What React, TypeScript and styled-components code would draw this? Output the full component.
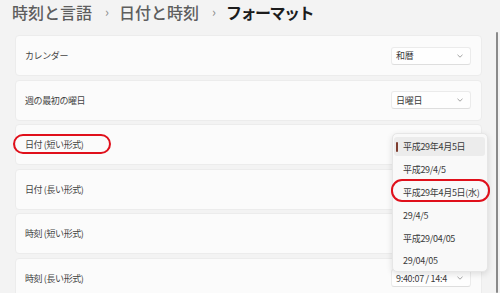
import React from "react";
import styled, { createGlobalStyle } from "styled-components";

const Global = createGlobalStyle`
  html, body { margin: 0; padding: 0; background: #f3f3f3; overflow: hidden; }
  body { font-family: "Noto Sans CJK JP", "Noto Sans", sans-serif; }
`;

const Page = styled.div`
  position: relative;
  width: 500px;
  height: 293px;
  overflow: hidden;
  background: #f3f3f3;
`;

const Header = styled.div`
  height: 35px;
  display: flex;
  align-items: flex-start;
  padding: 1px 0 0 12px;
  box-sizing: border-box;
`;

const Crumb = styled.span<{ $current?: boolean }>`
  font-size: 16px;
  line-height: 22px;
  font-weight: ${(p) => (p.$current ? 700 : 500)};
  letter-spacing: ${(p) => (p.$current ? "-1.5px" : "0")};
  color: ${(p) => (p.$current ? "#1c1c1c" : "#5e5e5e")};
`;

const Sep = styled.span`
  font-size: 13px;
  line-height: 22px;
  color: #8c8c8c;
  margin: 0 10px 0 13px;
`;

const List = styled.div`
  display: flex;
  flex-direction: column;
  gap: 3.6px;
  margin: 0 18px 0 15px;
`;

const Card = styled.div`
  height: 41px;
  box-sizing: border-box;
  display: flex;
  align-items: center;
  justify-content: space-between;
  padding: 0 10px 0 9px;
  background: #fbfbfb;
  border: 1px solid #ececec;
  border-radius: 4px;
`;

const Label = styled.span`
  font-size: 9px;
  color: #444444;
  letter-spacing: -0.4px;
`;

const Select = styled.div`
  width: 80px;
  height: 18px;
  box-sizing: border-box;
  display: flex;
  align-items: center;
  justify-content: space-between;
  padding: 0 7px 0 4px;
  background: #fefefe;
  border: 1px solid #ebebeb;
  border-bottom-color: #dedede;
  border-radius: 3px;
  font-size: 9px;
  color: #3a3a3a;
  letter-spacing: -0.3px;
`;

const Chevron = () => (
  <svg width="6" height="4" viewBox="0 0 6 4">
    <polyline points="0.5,0.8 3,3.2 5.5,0.8" fill="none" stroke="#8a8a8a" strokeWidth="0.8" />
  </svg>
);

const Popup = styled.div`
  position: absolute;
  left: 392px;
  top: 133px;
  width: 96px;
  height: 139px;
  box-sizing: border-box;
  padding: 3px 2px 0 1px;
  display: flex;
  flex-direction: column;
  gap: 3.9px;
  background: #f9f9f9;
  border: 1px solid #e6e6e6;
  border-radius: 5px;
  box-shadow: 0 2px 6px rgba(0, 0, 0, 0.12);
`;

const Item = styled.div<{ $selected?: boolean }>`
  position: relative;
  height: 19px;
  display: flex;
  align-items: center;
  padding-left: 9px;
  border-radius: 3px;
  font-size: 9px;
  color: #3a3a3a;
  letter-spacing: -0.3px;
  background: ${(p) => (p.$selected ? "#ececec" : "transparent")};
`;

const Accent = styled.span`
  position: absolute;
  left: 2px;
  top: 5px;
  width: 2px;
  height: 10px;
  border-radius: 1px;
  background: #7e3d2f;
`;

const Mark = styled.div<{ $x: number; $y: number; $w: number; $h: number }>`
  position: absolute;
  left: ${(p) => p.$x}px;
  top: ${(p) => p.$y}px;
  width: ${(p) => p.$w}px;
  height: ${(p) => p.$h}px;
  box-sizing: border-box;
  border: 2.6px solid #e0101b;
  border-radius: 11px;
`;

const Scrollbar = styled.div`
  position: absolute;
  left: 496px;
  top: 32px;
  bottom: 0;
  width: 1.5px;
  border-radius: 1px;
  background: #8a8a8a;
`;

const rows: { label: string; value?: string }[] = [
  { label: "カレンダー", value: "和暦" },
  { label: "週の最初の曜日", value: "日曜日" },
  { label: "日付 (短い形式)" },
  { label: "日付 (長い形式)" },
  { label: "時刻 (短い形式)" },
  { label: "時刻 (長い形式)", value: "9:40:07 / 14:4" },
];

const options = [
  "平成29年4月5日",
  "平成29/4/5",
  "平成29年4月5日(水)",
  "29/4/5",
  "平成29/04/05",
  "29/04/05",
];

export default function App() {
  return (
    <Page>
      <Global />
      <Header>
        <Crumb>時刻と言語</Crumb>
        <Sep>›</Sep>
        <Crumb>日付と時刻</Crumb>
        <Sep>›</Sep>
        <Crumb $current>フォーマット</Crumb>
      </Header>
      <List>
        {rows.map((r) => (
          <Card key={r.label}>
            <Label>{r.label}</Label>
            {r.value && (
              <Select>
                <span>{r.value}</span>
                <Chevron />
              </Select>
            )}
          </Card>
        ))}
      </List>
      <Popup>
        {options.map((o, i) => (
          <Item key={o} $selected={i === 0}>
            {i === 0 && <Accent />}
            {o}
          </Item>
        ))}
      </Popup>
      <Mark $x={13} $y={134} $w={98} $h={20} />
      <Mark $x={391} $y={179} $w={99} $h={23} />
      <Scrollbar />
    </Page>
  );
}
